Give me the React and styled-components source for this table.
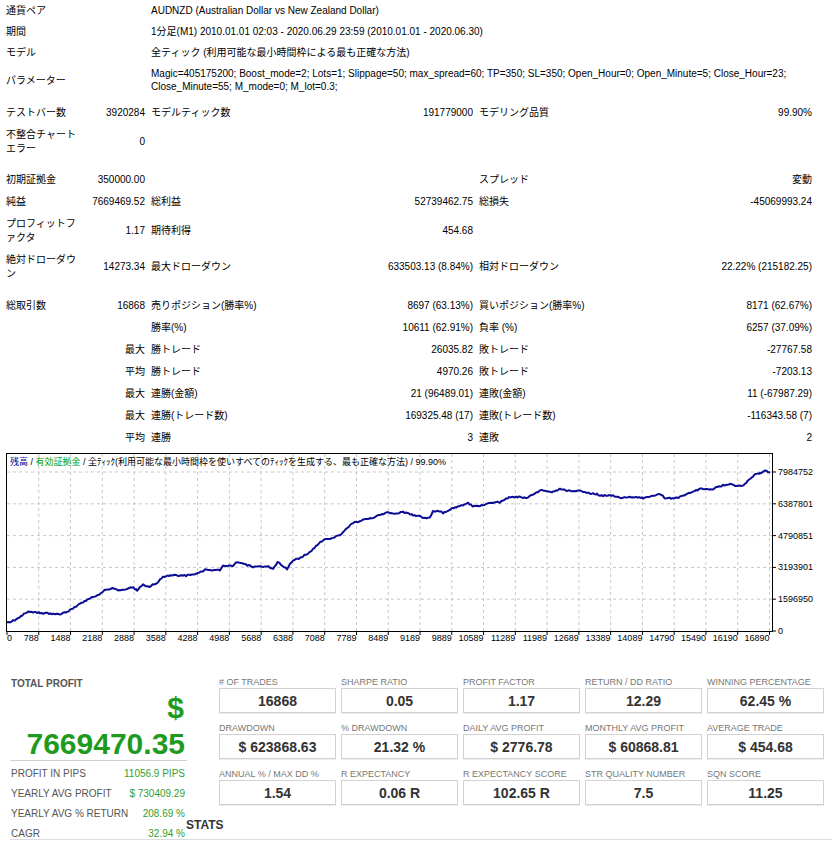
import React from "react";
import styled, { createGlobalStyle } from "styled-components";

const GlobalStyle = createGlobalStyle`
  body {
    margin: 0;
    background: #fff;
  }
`;

const Page = styled.div`
  width: 834px;
  font-family: "Liberation Sans", "Noto Sans CJK JP", sans-serif;
  font-size: 10px;
  color: #000;
`;

const InfoTable = styled.div`
  display: grid;
  grid-template-columns: 145px 1fr;
  padding-left: 3px;
`;

const InfoCell = styled.div`
  padding: 4px 3px;
  line-height: 13px;
  align-self: center;
`;

const StatTable = styled.div`
  display: grid;
  grid-template-columns: 77px 68px 180px 148px 200px 139px;
  align-items: center;
  padding-left: 3px;
  margin-top: 5px;
`;

const Cell = styled.div`
  padding: 4px 3px;
  line-height: 14px;
  text-align: ${(p) => (p.$value ? "right" : "left")};
  white-space: ${(p) => (p.$value ? "nowrap" : "normal")};
`;

const Spacer = styled.div`
  grid-column: 1 / -1;
  height: ${(p) => p.$h}px;
`;

const ChartSvg = styled.svg`
  display: block;
  font-family: "Liberation Sans", "Noto Sans CJK JP", sans-serif;
`;

const Summary = styled.div`
  display: flex;
  margin: 28px 2px 0 10px;
  border-bottom: 1px solid #dcdcdc;
  font-family: "Liberation Sans", sans-serif;
`;

const ProfitPanel = styled.div`
  width: 177px;
  flex: none;
  margin-bottom: -2px;
`;

const PanelTitle = styled.div`
  margin-top: 1px;
  padding-left: 1px;
  font-size: 10px;
  line-height: 12px;
  font-weight: bold;
  color: #555;
`;

const BigGreen = styled.div`
  margin-top: ${(p) => p.$top}px;
  padding-right: ${(p) => p.$pad}px;
  text-align: right;
  font-size: 30px;
  line-height: 30px;
  font-weight: bold;
  color: #1e9b1e;
`;

const Divider = styled.div`
  height: 1px;
  background: #d0d0d0;
  margin-top: 1px;
`;

const ProfitRow = styled.div`
  display: flex;
  justify-content: space-between;
  padding: 5px 2px 0 1px;
  line-height: 15px;
  font-size: 10px;
  white-space: nowrap;
  color: #555;
`;

const ProfitValue = styled.span`
  color: #2f9e2f;
`;

const RightColumn = styled.div`
  flex: 1;
  display: flex;
  flex-direction: column;
`;

const CardGrid = styled.div`
  display: grid;
  grid-template-columns: repeat(5, 117px);
  column-gap: 5px;
  row-gap: 10px;
  margin-left: 32px;
`;

const CardLabel = styled.div`
  font-size: 9px;
  line-height: 11px;
  color: #777;
  white-space: nowrap;
`;

const CardBox = styled.div`
  height: 25px;
  box-sizing: border-box;
  border: 1px solid #d2d2d2;
  box-shadow: 0 1px 0 #ececec;
  display: flex;
  align-items: center;
  justify-content: center;
  font-size: 14px;
  font-weight: bold;
  color: #333;
`;

const StatsHeading = styled.div`
  margin: auto 0 7px -1px;
  font-size: 12px;
  line-height: 14px;
  font-weight: bold;
  color: #333;
`;

const INFO = [
  ["通貨ペア", "AUDNZD (Australian Dollar vs New Zealand Dollar)"],
  ["期間", "1分足(M1) 2010.01.01 02:03 - 2020.06.29 23:59 (2010.01.01 - 2020.06.30)"],
  ["モデル", "全ティック (利用可能な最小時間枠による最も正確な方法)"],
  [
    "パラメーター",
    [
      "Magic=405175200; Boost_mode=2; Lots=1; Slippage=50; max_spread=60; TP=350; SL=350; Open_Hour=0; Open_Minute=5; Close_Hour=23;",
      "Close_Minute=55; M_mode=0; M_lot=0.3;",
    ],
  ],
];

const STATS = [
  ["テストバー数", "3920284", "モデルティック数", "191779000", "モデリング品質", "99.90%"],
  ["不整合チャートエラー", "0", "", "", "", ""],
  9,
  ["初期証拠金", "350000.00", "", "", "スプレッド", "変動"],
  ["純益", "7669469.52", "総利益", "52739462.75", "総損失", "-45069993.24"],
  ["プロフィットファクタ", "1.17", "期待利得", "454.68", "", ""],
  ["絶対ドローダウン", "14273.34", "最大ドローダウン", "633503.13 (8.84%)", "相対ドローダウン", "22.22% (215182.25)"],
  10,
  ["総取引数", "16868", "売りポジション(勝率%)", "8697 (63.13%)", "買いポジション(勝率%)", "8171 (62.67%)"],
  ["", "", "勝率(%)", "10611 (62.91%)", "負率 (%)", "6257 (37.09%)"],
  ["", "最大", "勝トレード", "26035.82", "敗トレード", "-27767.58"],
  ["", "平均", "勝トレード", "4970.26", "敗トレード", "-7203.13"],
  ["", "最大", "連勝(金額)", "21 (96489.01)", "連敗(金額)", "11 (-67987.29)"],
  ["", "最大", "連勝(トレード数)", "169325.48 (17)", "連敗(トレード数)", "-116343.58 (7)"],
  ["", "平均", "連勝", "3", "連敗", "2"],
];

const CARDS = [
  ["# OF TRADES", "16868"],
  ["SHARPE RATIO", "0.05"],
  ["PROFIT FACTOR", "1.17"],
  ["RETURN / DD RATIO", "12.29"],
  ["WINNING PERCENTAGE", "62.45 %"],
  ["DRAWDOWN", "$ 623868.63"],
  ["% DRAWDOWN", "21.32 %"],
  ["DAILY AVG PROFIT", "$ 2776.78"],
  ["MONTHLY AVG PROFIT", "$ 60868.81"],
  ["AVERAGE TRADE", "$ 454.68"],
  ["ANNUAL % / MAX DD %", "1.54"],
  ["R EXPECTANCY", "0.06 R"],
  ["R EXPECTANCY SCORE", "102.65 R"],
  ["STR QUALITY NUMBER", "7.5"],
  ["SQN SCORE", "11.25"],
];

const PROFIT_ROWS = [
  ["PROFIT IN PIPS", "11056.9 PIPS"],
  ["YEARLY AVG PROFIT", "$ 730409.29"],
  ["YEARLY AVG % RETURN", "208.69 %"],
  ["CAGR", "32.94 %"],
];

const X_LABELS = [
  "0", "788", "1488", "2188", "2888", "3588", "4288", "4988", "5688", "6388",
  "7088", "7789", "8489", "9189", "9889", "10589", "11289", "11989", "12689",
  "13389", "14089", "14790", "15490", "16190", "16890",
];
const Y_LABELS = ["0", "1596950", "3193901", "4790851", "6387801", "7984752"];

// traced from the tester graph, page coordinates
const KEYS = [
  [7, 623], [15, 620], [27, 612], [40, 613], [60, 614], [67, 612], [77, 606],
  [87, 600], [100, 594], [105, 590], [115, 588], [120, 591], [132, 587],
  [137, 590], [143, 585], [148, 587], [157, 583], [163, 577], [173, 575],
  [180, 576], [193, 575], [200, 572], [205, 570], [220, 570], [223, 566],
  [233, 566], [237, 562], [247, 565], [253, 567], [267, 566], [273, 569],
  [278, 562], [287, 569], [293, 560], [300, 558], [310, 552], [323, 540],
  [330, 539], [340, 535], [352, 523], [360, 521], [373, 518], [387, 512],
  [393, 514], [403, 512], [413, 515], [425, 518], [430, 517], [433, 511],
  [440, 511], [443, 513], [452, 508], [463, 505], [468, 503], [473, 506],
  [480, 506], [490, 503], [500, 502], [503, 500], [510, 497], [520, 497],
  [527, 498], [535, 493], [543, 490], [553, 492], [560, 489], [570, 491],
  [582, 491], [587, 493], [597, 494], [600, 496], [610, 495], [623, 498],
  [630, 497], [643, 498], [650, 497], [660, 494], [665, 498], [677, 498],
  [690, 493], [700, 489], [713, 489], [720, 486], [730, 484], [735, 486],
  [742, 486], [747, 482], [755, 474], [760, 473], [765, 471], [770, 472],
];

const buildEquityPath = () => {
  let seed = 17;
  const rand = () => {
    seed = (seed * 16807) % 2147483647;
    return seed / 2147483647;
  };
  const pts = [];
  for (let i = 0; i < KEYS.length - 1; i++) {
    const [x0, y0] = KEYS[i];
    const [x1, y1] = KEYS[i + 1];
    for (let x = x0; x < x1; x += 1.5) {
      const t = (x - x0) / (x1 - x0);
      const y = y0 + (y1 - y0) * t + (rand() - 0.5) * 1.4;
      pts.push([x, y]);
    }
  }
  pts.push(KEYS[KEYS.length - 1]);
  return pts
    .map(([x, y], i) => `${i ? "L" : "M"}${x.toFixed(1)} ${y.toFixed(1)}`)
    .join(" ");
};

const EQUITY = buildEquityPath();

const gridX = (k) => 7 + k * 31.77;
const gridY = (k) => 631 - k * 31.8;

const EquityChart = () => (
  <ChartSvg width="834" height="200" viewBox="0 449 834 200">
    <rect x="6.5" y="453.5" width="766" height="178" fill="#fff" />
    {X_LABELS.slice(1).map((_, i) => (
      <line
        key={"gx" + i}
        x1={gridX(i + 1)}
        x2={gridX(i + 1)}
        y1="454"
        y2="631"
        stroke="#c8c8c8"
        strokeDasharray="3 3"
      />
    ))}
    {Y_LABELS.slice(1).map((_, i) => (
      <line
        key={"gy" + i}
        x1="7"
        x2="772"
        y1={gridY(i + 1)}
        y2={gridY(i + 1)}
        stroke="#c8c8c8"
        strokeDasharray="3 3"
      />
    ))}
    <path d={EQUITY} fill="none" stroke="#0c0c94" strokeWidth="2" strokeLinejoin="round" />
    <rect x="6.5" y="453.5" width="766" height="178" fill="none" stroke="#000" />
    {X_LABELS.map((label, i) => (
      <g key={"xl" + label}>
        <line x1={gridX(i)} x2={gridX(i)} y1="632" y2="635" stroke="#000" />
        <text
          x={i === 0 ? 7 : gridX(i)}
          y="641"
          fontSize="9"
          textAnchor={i === 0 ? "start" : "end"}
        >
          {label}
        </text>
      </g>
    ))}
    {Y_LABELS.map((label, i) => (
      <g key={"yl" + label}>
        <line x1="773" x2="776" y1={gridY(i)} y2={gridY(i)} stroke="#000" />
        <text x="778" y={gridY(i) + 3} fontSize="9">
          {label}
        </text>
      </g>
    ))}
    <text x="10" y="464.5" fontSize="9">
      <tspan fill="#00008b">残高</tspan>
      <tspan> / </tspan>
      <tspan fill="#00a000">有効証拠金</tspan>
      <tspan> / 全ﾃｨｯｸ(利用可能な最小時間枠を使いすべてのﾃｨｯｸを生成する、最も正確な方法) / 99.90%</tspan>
    </text>
  </ChartSvg>
);

const App = () => (
  <Page>
    <GlobalStyle />
    <InfoTable>
      {INFO.map(([label, value]) => (
        <React.Fragment key={label}>
          <InfoCell>{label}</InfoCell>
          <InfoCell>
            {Array.isArray(value)
              ? value.map((line) => <div key={line}>{line}</div>)
              : value}
          </InfoCell>
        </React.Fragment>
      ))}
    </InfoTable>

    <StatTable>
      {STATS.map((row, r) =>
        typeof row === "number" ? (
          <Spacer key={"s" + r} $h={row} />
        ) : (
          row.map((text, c) => (
            <Cell key={r + "-" + c} $value={c % 2 === 1}>
              {text}
            </Cell>
          ))
        )
      )}
    </StatTable>

    <EquityChart />

    <Summary>
      <ProfitPanel>
        <PanelTitle>TOTAL PROFIT</PanelTitle>
        <BigGreen $top={3} $pad={3}>$</BigGreen>
        <BigGreen $top={6} $pad={2}>7669470.35</BigGreen>
        <Divider />
        {PROFIT_ROWS.map(([label, value]) => (
          <ProfitRow key={label}>
            <span>{label}</span>
            <ProfitValue>{value}</ProfitValue>
          </ProfitRow>
        ))}
      </ProfitPanel>
      <RightColumn>
        <CardGrid>
          {CARDS.map(([label, value]) => (
            <div key={label}>
              <CardLabel>{label}</CardLabel>
              <CardBox>{value}</CardBox>
            </div>
          ))}
        </CardGrid>
        <StatsHeading>STATS</StatsHeading>
      </RightColumn>
    </Summary>
  </Page>
);

export default App;
